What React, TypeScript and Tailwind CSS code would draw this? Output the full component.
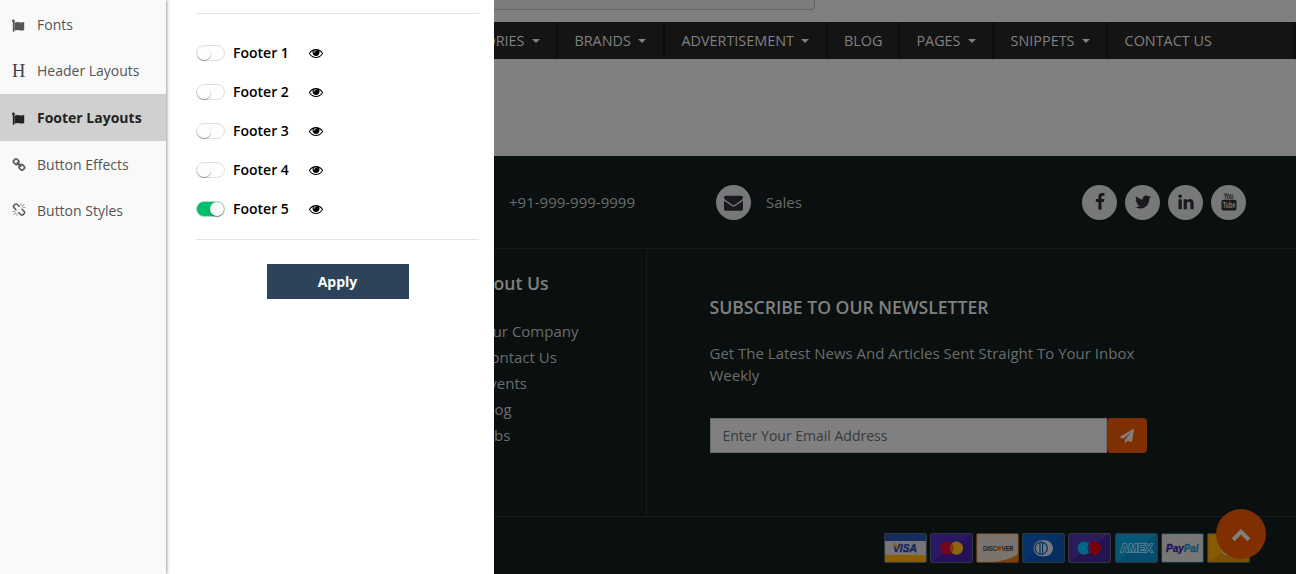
import React from 'react';

const icons = {
  eye: 'M1664 960q-152-236-381-353 61 104 61 225 0 185-131.5 316.5t-316.5 131.5-316.5-131.5-131.5-316.5q0-121 61-225-229 117-381 353 133 205 333.5 326.5t434.5 121.5 434.5-121.5 333.5-326.5zm-720-384q0-20-14-34t-34-14q-125 0-214.5 89.5t-89.5 214.5q0 20 14 34t34 14 34-14 14-34q0-86 61-147t147-61q20 0 34-14t14-34zm848 384q0 34-20 69-140 230-376.5 368.5t-499.5 138.5-499.5-139-376.5-368q-20-35-20-69t20-69q140-229 376.5-368t499.5-139 499.5 139 376.5 368q20 35 20 69z',
  flag: 'M110 1760V440Q0 400 0 240 10 60 190 60 370 60 390 240 390 380 300 440V1760ZM335 480Q720 340 1000 440 1300 520 1680 430V1500Q1350 1630 1000 1550 720 1480 335 1620Z',
  chain: 'M1520 1216q0-40-28-68l-208-208q-28-28-68-28-42 0-72 32 3 3 19 18.5t21.5 21.5 15 19 13 25.5 3.5 27.5q0 40-28 68t-68 28q-15 0-27.5-3.5t-25.5-13-19-15-21.5-21.5-18.5-19q-33 31-33 73 0 40 28 68l206 207q27 27 68 27 40 0 68-26l147-146q28-28 28-67zm-703-705q0-40-28-68l-206-207q-28-28-68-28-39 0-68 27l-147 146q-28 28-28 67 0 40 28 68l208 208q27 27 68 27 42 0 72-31-3-3-19-18.5t-21.5-21.5-15-19-13-25.5-3.5-27.5q0-40 28-68t68-28q15 0 27.5 3.5t25.5 13 19 15 21.5 21.5 18.5 19q33-31 33-73zm895 705q0 120-85 203l-147 146q-83 83-203 83-121 0-204-85l-206-207q-83-83-83-203 0-123 88-209l-88-88q-86 88-208 88-120 0-204-84l-208-208q-84-84-84-204t85-203l147-146q83-83 203-83 121 0 204 85l206 207q83 83 83 203 0 123-88 209l88 88q86-88 208-88 120 0 204 84l208 208q84 84 84 204z',
  broken: 'M503 1271l-256 256q-10 9-23 9-12 0-23-9-9-10-9-23t9-23l256-256q10-9 23-9t23 9q9 10 9 23t-9 23zm169 41v320q0 14-9 23t-23 9-23-9-9-23v-320q0-14 9-23t23-9 23 9 9 23zm-224-224q0 14-9 23t-23 9h-320q-14 0-23-9t-9-23 9-23 23-9h320q14 0 23 9t9 23zm1264 128q0 120-85 203l-147 146q-83 83-203 83-121 0-204-85l-334-335q-21-21-42-56l239-18 273 274q28 28 68 27.5t68-27.5l147-146q28-28 28-67 0-40-28-68l-274-275 18-239q35 21 56 42l336 336q84 86 84 204zm-617-724l-239 18-273-274q-28-28-68-28-39 0-68 27l-147 146q-28 28-28 67 0 40 28 68l274 274-18 240q-35-21-56-42l-336-336q-84-86-84-204 0-120 85-203l147-146q83-83 203-83 121 0 204 85l334 335q21 21 42 56zm633 84q0 14-9 23t-23 9h-320q-14 0-23-9t-9-23 9-23 23-9h320q14 0 23 9t9 23zm-544-544v320q0 14-9 23t-23 9-23-9-9-23v-320q0-14 9-23t23-9 23 9 9 23zm407 151l-256 256q-11 9-23 9t-23-9q-9-10-9-23t9-23l256-256q10-9 23-9t23 9q9 10 9 23t-9 23z',
  envelope: 'M1792 710v794q0 66-47 113t-113 47h-1472q-66 0-113-47t-47-113v-794q44 49 101 87 362 246 497 345 57 42 92.5 65.5t94.5 48 110 24.5h2q51 0 110-24.5t94.5-48 92.5-65.5q170-123 498-345 57-39 100-87zm0-294q0 79-49 151t-122 123q-376 261-468 325-10 7-42.5 31t-54 38.5-52 32.5-57.5 27-50 9h-2q-23 0-50-9t-57.5-27-52-32.5-54-38.5-42.5-31q-91-64-262-182.5t-205-142.5q-62-42-117-115.5t-55-136.5q0-78 41.5-130t118.5-52h1472q65 0 112.5 47t47.5 113z',
  facebook: 'M1343 12v264h-157q-86 0-116 36t-30 108v189h293l-39 296h-254v759h-306v-759h-255v-296h255v-218q0-186 104-288.5t277-102.5q147 0 228 12z',
  twitter: 'M1684 408q-67 98-162 167 1 14 1 42 0 130-38 259.5t-115.5 248.5-184.5 210.5-258 146-323 54.5q-271 0-496-145 35 4 78 4 225 0 401-138-105-2-188-64.5t-114-159.5q33 5 61 5 43 0 85-11-112-23-185.5-111.5t-73.5-205.5v-4q68 38 146 41-66-44-105-115t-39-154q0-88 44-163 121 149 294.5 238.5t371.5 99.5q-8-38-8-74 0-134 94.5-228.5t228.5-94.5q140 0 236 102 109-21 205-78-37 115-142 178 93-10 186-50z',
  linkedin: 'M477 625v991h-330v-991h330zm21-306q1 73-50.5 122t-135.5 49h-2q-82 0-132-49t-50-122q0-74 51.5-122.5t134.5-48.5 133 48.5 51 122.5zm1166 729v568h-329v-530q0-105-40.5-164.5t-126.5-59.5q-63 0-105.5 34.5t-63.5 85.5q-11 30-11 81v553h-329q2-399 2-647t-1-296l-1-48h329v144h-2q20-32 41-56t56.5-52 87-43.5 114.5-15.5q171 0 275 113.5t104 332.5z',
  plane: 'M1764 11q33 24 27 64l-256 1536q-5 29-32 45-14 8-31 8-11 0-24-5l-453-185-242 295q-18 23-49 23-13 0-22-4-19-7-30.5-23.5t-11.5-36.5v-349l864-1059-1069 925-395-162q-37-14-40-55-2-40 32-59l1664-960q15-9 32-9 20 0 36 11z',
  up: 'M1683 1331l-166 165q-19 19-45 19t-45-19l-531-531-531 531q-19 19-45 19t-45-19l-166-165q-19-19-19-45.5t19-45.5l742-741q19-19 45-19t45 19l742 741q19 19 19 45.5t-19 45.5z',
};

function Icon({ name, className }: { name: keyof typeof icons; className: string }) {
  return (
    <svg viewBox="0 0 1792 1792" className={`shrink-0 ${className}`} fill="currentColor" aria-hidden="true">
      <path d={icons[name]} />
    </svg>
  );
}

const menu: { label: string; icon?: keyof typeof icons; row: string; glyph?: string }[] = [
  { label: 'Fonts', icon: 'flag', row: 'h-[47px]', glyph: 'mt-px size-[13px]' },
  { label: 'Header Layouts', row: 'h-[46px] pb-0.5' },
  { label: 'Footer Layouts', icon: 'flag', row: 'h-[47px] bg-[#d0d0d0] font-bold text-[#222]', glyph: 'mt-px size-[13px]' },
  { label: 'Button Effects', icon: 'chain', row: 'h-[47px]', glyph: 'size-[14px] stroke-[#555] stroke-[30]' },
  { label: 'Button Styles', icon: 'broken', row: 'h-[46px] pb-0.5', glyph: 'size-[14px]' },
];

function Sidebar() {
  return (
    <aside className="z-10 w-[166px] shrink-0 bg-[#f9f9f9] pt-px text-[14px] text-[#555] shadow-[1px_0_3px_rgba(0,0,0,0.4)]">
      {menu.map((m) => (
        <div key={m.label} className={`flex items-center pl-3 ${m.row}`}>
          <span className="flex w-[25px]">
            {m.icon ? (
              <Icon name={m.icon} className={m.glyph ?? ''} />
            ) : (
              <span className="mt-0.5 font-['Liberation_Serif',serif] text-[18.5px] leading-none text-[#444]">H</span>
            )}
          </span>
          <span>{m.label}</span>
        </div>
      ))}
    </aside>
  );
}

function Toggle({ on }: { on: boolean }) {
  return (
    <span
      className={`flex h-4 w-[29px] rounded-full border ${
        on ? 'justify-end border-[#a9dcc4] bg-[#04be6c]' : 'border-[#dfdfdf] bg-[#fdfdfd]'
      }`}
    >
      <span className="size-[14px] rounded-full bg-[#fdfdfd] shadow-[0_1px_1px_rgba(0,0,0,0.35)]" />
    </span>
  );
}

function Settings() {
  return (
    <section className="w-[328px] shrink-0 bg-white pl-[30px] pr-[15px] pt-[13px]">
      <div className="border-y border-[#e2e2e2] pb-[11px] pt-[19px]">
        {[1, 2, 3, 4, 5].map((n) => (
          <div key={n} className="flex h-[39px] items-center text-[14px] font-semibold text-black">
            <Toggle on={n === 5} />
            <span className="ml-2 w-[76px]">Footer {n}</span>
            <Icon name="eye" className="size-[14px]" />
          </div>
        ))}
      </div>
      <button className="mx-auto mt-6 block h-[35px] w-[142px] bg-[#2c4359] text-[14px] font-bold text-white">
        Apply
      </button>
    </section>
  );
}

const nav = [
  { label: 'CATEGORIES', caret: true, box: 'w-[64px] justify-end' },
  { label: 'BRANDS', caret: true, box: 'w-[107px] pl-[16.4px]' },
  { label: 'ADVERTISEMENT', caret: true, box: 'w-[163px] pl-[16.4px]' },
  { label: 'BLOG', caret: false, box: 'w-[72px] pl-4' },
  { label: 'PAGES', caret: true, box: 'w-[94px] pl-[16.4px]' },
  { label: 'SNIPPETS', caret: true, box: 'w-[114px] pl-[16.6px]' },
  { label: 'CONTACT US', caret: false, box: 'w-[188px] border-r-0 pl-[16.6px]' },
];

function Nav() {
  return (
    <nav className="mt-3 flex h-[37px] bg-[#141414] text-[14.4px] text-[#808080]">
      {nav.map((n) => (
        <div key={n.label} className={`flex shrink-0 items-center border-r-2 border-[#0c0c0c] pr-4 ${n.box}`}>
          <span className="whitespace-nowrap">{n.label}</span>
          {n.caret && (
            <span className="ml-[7.5px] h-0 w-0 shrink-0 border-x-4 border-t-4 border-x-transparent border-t-[#808080]" />
          )}
        </div>
      ))}
    </nav>
  );
}

function Disc({ children }: { children: React.ReactNode }) {
  return (
    <span className="flex size-[35px] shrink-0 items-center justify-center rounded-full bg-[#777978] text-[#17191e]">
      {children}
    </span>
  );
}

function YoutubeMark() {
  return (
    <svg viewBox="0 0 20 20" className="size-5" aria-hidden="true">
      <text x="4.7" y="6.5" fontSize="9" fontWeight="700" fontFamily="Liberation Sans, sans-serif" textLength="9.6" lengthAdjust="spacingAndGlyphs" fill="#17191e">You</text>
      <rect x="2.5" y="7.8" width="15" height="10.6" rx="2" fill="#17191e" />
      <text x="3.7" y="16.2" fontSize="9" fontWeight="700" fontFamily="Liberation Sans, sans-serif" textLength="12.6" lengthAdjust="spacingAndGlyphs" fill="#777978">Tube</text>
    </svg>
  );
}

function Card({ bg, edge = '#303b3e', children }: { bg: string; edge?: string; children: React.ReactNode }) {
  return (
    <svg viewBox="0 0 43 30" className="h-[30px] w-[43px] shrink-0">
      <rect x="0.6" y="0.6" width="41.8" height="28.8" rx="1.2" fill={bg} />
      {children}
      <rect x="0.6" y="0.6" width="41.8" height="28.8" rx="1.2" fill="none" stroke={edge} strokeWidth="1" />
    </svg>
  );
}

const sans = 'Liberation Sans, sans-serif';

function Cards() {
  return (
    <div className="flex gap-[3.2px] pl-[389.7px] pt-4">
      <Card bg="#777577">
        <path d="M1 1h41v7H1z" fill="#152c61" />
        <path d="M1 22h41v7H1z" fill="#8a5f08" />
        <text x="9" y="19" fontSize="11" fontWeight="700" fontStyle="italic" fontFamily={sans} textLength="24" lengthAdjust="spacingAndGlyphs" fill="#17245c" stroke="#17245c" strokeWidth="0.4">VISA</text>
        <path d="M8.5 11h4l1.5 5z" fill="#946508" />
      </Card>
      <Card bg="#2b1763">
        <path d="M1 29L42 1v28z" fill="#24115a" />
        <circle cx="17" cy="15.2" r="6.6" fill="#76051c" />
        <circle cx="26.5" cy="15.2" r="6.6" fill="#8b660f" />
        <path d="M21.75 10.6a6.6 6.6 0 0 1 0 9.2 6.6 6.6 0 0 1 0-9.2z" fill="#7c350c" />
      </Card>
      <Card bg="#7b746c" edge="#5b3413">
        <path d="M18 29Q34 27 42 21v8z" fill="#80400b" />
        <text x="7" y="17.7" fontSize="6.5" fontFamily={sans} textLength="14" lengthAdjust="spacingAndGlyphs" fill="#191817" stroke="#191817" strokeWidth="0.2">DISC</text>
        <circle cx="23.2" cy="15.3" r="2.4" fill="#85420d" />
        <text x="25.7" y="17.7" fontSize="6.5" fontWeight="700" fontFamily={sans} textLength="11.8" lengthAdjust="spacingAndGlyphs" fill="#191817">VER</text>
      </Card>
      <Card bg="#08336a">
        <path d="M1 29L42 1v28z" fill="#062d60" />
        <rect x="11.5" y="7.3" width="19.5" height="16" rx="8" fill="#747a80" />
        <circle cx="19.2" cy="15.3" r="6.7" fill="#0a3064" />
        <circle cx="19.2" cy="15.3" r="5.5" fill="#747a80" />
        <path d="M18 9.6v11.4M20.6 9.6v11.4" stroke="#0a3064" strokeWidth="1.2" />
      </Card>
      <Card bg="#2b1b5b">
        <path d="M1 29L42 1v28z" fill="#23134f" />
        <circle cx="16.3" cy="15.2" r="6.6" fill="#056585" />
        <circle cx="26.3" cy="15.2" r="6.6" fill="#790009" />
        <path d="M21.3 10.9a6.6 6.6 0 0 1 0 8.6 6.6 6.6 0 0 1 0-8.6z" fill="#292451" />
      </Card>
      <Card bg="#075779">
        <path d="M1 29L42 1v28z" fill="#064c70" />
        <text x="5.5" y="19.2" fontSize="10.5" fontWeight="700" fontFamily={sans} textLength="32" lengthAdjust="spacingAndGlyphs" fill="#075575" stroke="#65818f" strokeWidth="1.5" paintOrder="stroke">AMEX</text>
      </Card>
      <Card bg="#797776" edge="#17343d">
        <text x="5" y="18.5" fontSize="10.5" fontWeight="700" fontStyle="italic" fontFamily={sans} textLength="18" lengthAdjust="spacingAndGlyphs" fill="#1d105b" stroke="#1d105b" strokeWidth="0.3">Pay</text>
        <text x="22.8" y="18.5" fontSize="10.5" fontWeight="700" fontStyle="italic" fontFamily={sans} textLength="14.8" lengthAdjust="spacingAndGlyphs" fill="#0a526e" stroke="#0a526e" strokeWidth="0.3">Pal</text>
      </Card>
      <Card bg="#865b04">
        <path d="M1 29L42 1v28z" fill="#7d5103" />
        <circle cx="21" cy="15.5" r="7" fill="#777" />
      </Card>
    </div>
  );
}

function Footer() {
  return (
    <footer className="mt-[97px] flex-1 bg-[#0a100f] text-[15px] text-[#6b6d6d]">
      <div className="flex h-[93px] items-center border-b border-[#151c1b] pl-[15px] pr-[50px]">
        <span className="w-[207px]">+91-999-999-9999</span>
        <Disc><Icon name="envelope" className="size-[19px]" /></Disc>
        <span className="ml-[15px]">Sales</span>
        <div className="ml-auto flex gap-2">
          <Disc><Icon name="facebook" className="size-[18px]" /></Disc>
          <Disc><Icon name="twitter" className="size-[18px]" /></Disc>
          <Disc><Icon name="linkedin" className="size-[18px]" /></Disc>
          <Disc><YoutubeMark /></Disc>
        </div>
      </div>
      <div className="flex h-[268px] border-b border-[#151c1b]">
        <div className="w-[153px] shrink-0 border-r border-[#151c1b] pt-5">
          <div className="-ml-[23px] text-[17.6px] font-semibold leading-7 text-[#808080]">About Us</div>
          <ul className="-ml-[13px] mt-[21px] leading-[26px]">
            <li>Our Company</li>
            <li>Contact Us</li>
            <li>Events</li>
            <li>Blog</li>
            <li>Jobs</li>
          </ul>
        </div>
        <div className="pl-[62.5px] pt-11">
          <h2 className="text-[17.6px] font-semibold leading-7 text-[#808080]">SUBSCRIBE TO OUR NEWSLETTER</h2>
          <p className="mt-[21px] w-[437px] leading-[22px]">Get The Latest News And Articles Sent Straight To Your Inbox Weekly</p>
          <div className="mt-8 flex h-[35px]">
            <div className="flex w-[397px] items-center border border-[#676a6d] bg-[#808080] pl-3 text-[14px] text-[#363b40]">
              Enter Your Email Address
            </div>
            <div className="flex w-10 items-center justify-center rounded bg-[#802f00] text-[#808080]">
              <Icon name="plane" className="size-[14px]" />
            </div>
          </div>
        </div>
      </div>
      <Cards />
    </footer>
  );
}

export default function App() {
  return (
    <div className="relative flex h-[574px] w-[1296px] overflow-hidden bg-white font-['Open_Sans',sans-serif]">
      <Sidebar />
      <Settings />
      <main className="flex w-[802px] flex-col overflow-hidden bg-[#808080]">
        <div className="h-[10px] w-[321px] shrink-0 rounded-br border-b border-r border-[#666] bg-[#7d7d7d]" />
        <Nav />
        <Footer />
      </main>
      <button className="absolute left-[1216px] top-[509px] flex size-[50px] items-center justify-center rounded-full bg-[#802f00] text-[#808080]">
        <Icon name="up" className="size-5" />
      </button>
    </div>
  );
}
